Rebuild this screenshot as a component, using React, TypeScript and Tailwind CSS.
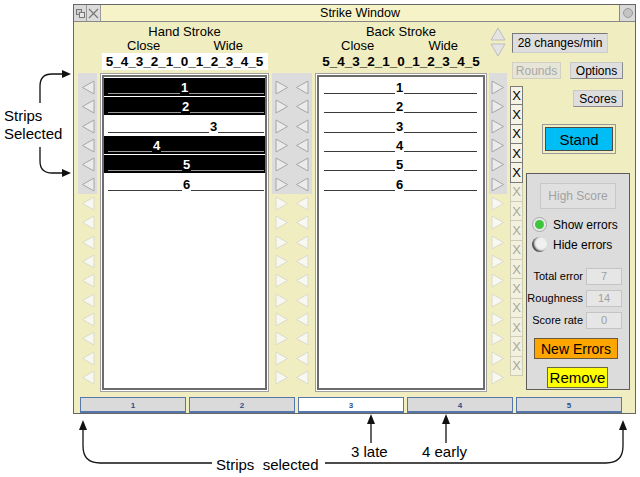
import React from 'react';

type Strip = { n: number; sel: boolean; left: string };

const handStrips: Strip[] = [
  { n: 1, sel: true, left: 'w-[72px]' },
  { n: 2, sel: true, left: 'w-[73px]' },
  { n: 3, sel: false, left: 'w-[101px]' },
  { n: 4, sel: true, left: 'w-[44px]' },
  { n: 5, sel: true, left: 'w-[74px]' },
  { n: 6, sel: false, left: 'w-[74px]' },
];

const backStrips: Strip[] = [1, 2, 3, 4, 5, 6].map((n) => ({ n, sel: false, left: 'w-[71px]' }));

const SCALE = '5_4_3_2_1_0_1_2_3_4_5';

function Tri({ dir, on }: { dir: 'l' | 'r'; on: boolean }) {
  const pts = dir === 'l' ? '13,1 1.5,7.5 13,14' : '1,1 12.5,7.5 1,14';
  return (
    <svg width="14" height="15" viewBox="0 0 14 15">
      <polygon
        points={pts}
        fill={on ? '#ebebeb' : '#f8f8f3'}
        stroke={on ? '#a6a6a6' : '#dcd9ca'}
        strokeWidth="1"
      />
    </svg>
  );
}

function ArrowCol({ dir, width }: { dir: 'l' | 'r'; width: string }) {
  return (
    <div className={`${width} mt-[51px] flex flex-col`}>
      <div className="bg-[#dcdcdc] pt-[5px]">
        {[0, 1, 2, 3, 4, 5].map((i) => (
          <div key={i} className="h-[19.33px] flex items-center justify-center">
            <Tri dir={dir} on />
          </div>
        ))}
      </div>
      {[0, 1, 2, 3, 4, 5, 6, 7, 8, 9].map((i) => (
        <div key={i} className="h-[19.33px] flex items-center justify-center">
          <Tri dir={dir} on={false} />
        </div>
      ))}
    </div>
  );
}

function StripRow({ s, pad }: { s: Strip; pad: string }) {
  const line = s.sel ? 'border-[#9a9a9a]' : 'border-[#3a3a3a]';
  return (
    <div className="h-[19.33px] pb-[1.33px]">
      <div className={`h-full flex items-end pb-[2px] ${pad} ${s.sel ? 'bg-black' : ''}`}>
        <div className={`${s.left} flex-none border-b ${line}`} />
        <span className={`px-[1px] text-[13px] font-bold leading-[13px] ${s.sel ? 'text-white' : 'text-black'}`}>
          {s.n}
        </span>
        <div className={`flex-1 border-b ${line}`} />
      </div>
    </div>
  );
}

function StrokeBox({ strips, pad }: { strips: Strip[]; pad: string }) {
  return (
    <div className="h-[319px] border border-[#a0a0a0] bg-white p-[1px]">
      <div className="h-full border-2 border-[#6c6c6c] pt-[1px]">
        {strips.map((s) => (
          <StripRow key={s.n} s={s} pad={pad} />
        ))}
      </div>
    </div>
  );
}

function Button({ children, className }: { children: React.ReactNode; className: string }) {
  return (
    <div className={`flex items-center justify-center text-[12px] leading-none ${className}`}>{children}</div>
  );
}

function Field({ label, value }: { label: string; value: string }) {
  return (
    <div className="flex items-center h-[17px]">
      <div className="w-[56px] text-right text-[11px] leading-none">{label}</div>
      <div className="ml-[3px] w-[36px] h-full bg-[#e6e6e6] border border-[#c4c4c4] flex items-center justify-center text-[11px] text-[#a0a0a0]">
        {value}
      </div>
    </div>
  );
}

export default function App() {
  return (
    <div className="relative w-[640px] h-[477px] overflow-hidden bg-white pl-[73px] pt-[4px] font-['Liberation_Sans',Arial,Helvetica,sans-serif] text-black">
      {/* window */}
      <div className="w-[563px] h-[410px] bg-[#f0eec1] border border-[#666] flex flex-col">
        {/* title bar */}
        <div className="h-[17px] flex border-b border-[#888]">
          <div className="w-[13px] bg-[#d9d9d9] border-r border-[#999] flex items-center justify-center">
            <svg width="9" height="9" viewBox="0 0 9 9">
              <rect x="0.5" y="0.5" width="5" height="5" fill="#cfcfcf" stroke="#777" />
              <rect x="3.5" y="3.5" width="5" height="5" fill="#e6e6e6" stroke="#777" />
            </svg>
          </div>
          <div className="w-[14px] bg-[#dcdcdc] border-r border-[#999] flex items-center justify-center">
            <svg width="11" height="11" viewBox="0 0 11 11">
              <path d="M1 1 L10 10 M10 1 L1 10" stroke="#777" strokeWidth="1.2" />
            </svg>
          </div>
          <div className="flex-1 bg-[#f6f3c9] text-center text-[12.5px] leading-[16px]">Strike Window</div>
          <div className="w-[16px] bg-[#d9d9d9] border-l border-[#888] flex items-center justify-center">
            <span className="w-[10px] h-[10px] rounded-full bg-[#c4c4c4] border border-[#9a9a9a]" />
          </div>
        </div>

        {/* columns */}
        <div className="h-[370px] flex items-start pl-[4px]">
          <ArrowCol dir="l" width="w-[19px]" />

          {/* hand stroke */}
          <div className="w-[169px] ml-[3px] flex flex-col">
            <div className="h-[51px] flex flex-col items-center pt-[3px]">
              <div className="text-[13px] leading-[14px]">Hand Stroke</div>
              <div className="w-full flex justify-between pl-[27px] pr-[26px] text-[13px] leading-[14px]">
                <span>Close</span>
                <span>Wide</span>
              </div>
              <div className="w-[166px] bg-white text-center text-[13.5px] font-bold leading-[17px]">{SCALE}</div>
            </div>
            <StrokeBox strips={handStrips} pad="pl-[4px] pr-[1px]" />
          </div>

          <div className="ml-[3px] flex">
            <ArrowCol dir="r" width="w-[20px]" />
            <ArrowCol dir="l" width="w-[20px]" />
          </div>

          {/* back stroke */}
          <div className="w-[172px] ml-[3px] flex flex-col">
            <div className="h-[51px] flex flex-col items-center pt-[3px]">
              <div className="text-[13px] leading-[14px]">Back Stroke</div>
              <div className="w-full flex justify-between pl-[26px] pr-[29px] text-[13px] leading-[14px]">
                <span>Close</span>
                <span>Wide</span>
              </div>
              <div className="text-center text-[13.5px] font-bold leading-[17px]">{SCALE}</div>
            </div>
            <StrokeBox strips={backStrips} pad="pl-[5px] pr-[6px]" />
          </div>

          {/* back right arrows with up/down */}
          <div className="relative ml-[2px] w-[18px]">
            <div className="absolute left-[1px] top-[5px] flex flex-col gap-[2px]">
              <svg width="16" height="14" viewBox="0 0 16 14">
                <polygon points="8,1 15,13 1,13" fill="#e4e4e4" stroke="#bdbdbd" />
              </svg>
              <svg width="16" height="14" viewBox="0 0 16 14">
                <polygon points="1,1 15,1 8,13" fill="#e4e4e4" stroke="#bdbdbd" />
              </svg>
            </div>
            <ArrowCol dir="r" width="w-[18px]" />
          </div>

          {/* right area */}
          <div className="ml-[2px] w-[122px] flex flex-col">
            <div className="mt-[11px] ml-[3px] w-[96px] h-[20px] bg-[#dedede] border border-[#777] border-b-[#ccc] border-r-[#ccc] flex items-center justify-center text-[12px]">
              28 changes/min
            </div>
            <div className="mt-[9px] flex">
              <Button className="ml-[3px] w-[49px] h-[17px] bg-[#e6e5d8] border border-[#d2d0c2] text-[#a8a8a8]">Rounds</Button>
              <Button className="ml-[9px] w-[53px] h-[17px] bg-[#dedede] border border-[#8a8a8a] border-t-[#c8c8c8] border-l-[#c8c8c8]">Options</Button>
            </div>
            <div className="mt-[7px] flex">
              <div className="ml-[1px] w-[13px] flex flex-col">
                {Array.from({ length: 15 }).map((_, i) => (
                  <div
                    key={i}
                    className={`h-[19.33px] border-b border-r border-l flex items-center justify-center text-[13px] leading-none ${
                      i === 0 ? 'border-t' : ''
                    } ${i < 5 ? 'border-[#7a7a7a] bg-[#f4f3e6] text-black' : 'border-[#cfccb6] bg-[#f2f1e0] text-[#a9a99a]'}`}
                  >
                    X
                  </div>
                ))}
              </div>
              <div className="flex-1 flex flex-col">
                <Button className="mt-[4px] self-end mr-[8px] w-[50px] h-[17px] bg-[#dedede] border border-[#8a8a8a] border-t-[#c8c8c8] border-l-[#c8c8c8]">Scores</Button>
                <div className="mt-[17px] ml-[19px] w-[74px] h-[30px] border border-[#9a9a9a] p-[2px]">
                  <div className="h-full bg-[#00bdf6] border border-[#4a4a4a] flex items-center justify-center text-[15px] leading-none">
                    Stand
                  </div>
                </div>
                <div className="mt-[19px] ml-[3px] w-[104px] h-[217px] bg-[#dcdcdc] border border-[#5c5c5c] flex flex-col">
                  <Button className="mt-[9px] ml-[13px] w-[76px] h-[26px] bg-[#e0e0e0] border border-[#c8c8c8] text-[#a2a2a2]">
                    High Score
                  </Button>
                  <div className="mt-[8px] ml-[5px] flex items-center h-[15px] gap-[6px]">
                    <span className="w-[15px] h-[15px] rounded-full bg-[#e8e8e8] border border-[#a8a8a8] flex items-center justify-center">
                      <span className="w-[9px] h-[9px] rounded-full bg-[#3cc63c]" />
                    </span>
                    <span className="text-[12px] leading-none">Show errors</span>
                  </div>
                  <div className="mt-[5px] ml-[5px] flex items-center h-[15px] gap-[6px]">
                    <span className="w-[15px] h-[15px] rounded-full bg-[#f0f0f0] shadow-[inset_2px_-1px_2px_#444]" />
                    <span className="text-[12px] leading-none">Hide errors</span>
                  </div>
                  <div className="mt-[16px] flex flex-col gap-[5px]">
                    <Field label="Total error" value="7" />
                    <Field label="Roughness" value="14" />
                    <Field label="Score rate" value="0" />
                  </div>
                  <div className="mt-[9px] ml-[7px] w-[84px] h-[21px] bg-[#ffa500] border border-[#6a5a3a] flex items-center justify-center text-[14px] leading-none">
                    New Errors
                  </div>
                  <div className="mt-[8px] ml-[20px] w-[61px] h-[21px] bg-[#ffff00] border border-[#6a6a3a] flex items-center justify-center text-[15px] leading-none">
                    Remove
                  </div>
                </div>
              </div>
            </div>
          </div>
        </div>

        {/* strip tabs */}
        <div className="mt-[5px] ml-[6px] flex gap-[3px]">
          {[1, 2, 3, 4, 5].map((n) => (
            <div
              key={n}
              className={`w-[106px] h-[16px] border border-[#5577aa] border-b-2 flex items-end justify-center ${
                n === 3 ? 'bg-white' : 'bg-[#dadada]'
              }`}
            >
              <span className="text-[8px] font-bold leading-[11px] text-[#2c4e8e]">{n}</span>
            </div>
          ))}
        </div>
      </div>

      {/* annotations */}
      <svg className="absolute inset-0 pointer-events-none" width="640" height="477" viewBox="0 0 640 477">
        <g fill="none" stroke="#111" strokeWidth="1.3">
          <path d="M40 103 L40 86 Q40 74 52 74 L63 74" />
          <path d="M40 147 L40 161 Q40 173 52 173 L63 173" />
          <path d="M83 428 L83 446 Q83 463 100 463 L212 463" />
          <path d="M325 463 L606 463 Q623 463 623 446 L623 428" />
          <path d="M371 443 L371 422" />
          <path d="M446 443 L446 422" />
        </g>
        <g fill="#111">
          <polygon points="71,74 62,70 62,78" />
          <polygon points="71,173 62,169 62,177" />
          <polygon points="83,420 79,430 87,430" />
          <polygon points="623,420 619,430 627,430" />
          <polygon points="371,414 367,424 375,424" />
          <polygon points="446,414 442,424 450,424" />
        </g>
      </svg>
      <div className="absolute left-[4px] top-[107px] text-[15px] leading-[18px]">
        <div>Strips</div>
        <div>Selected</div>
      </div>
      <div className="absolute left-[216px] top-[456px] text-[15px] leading-[18px] whitespace-pre">Strips  selected</div>
      <div className="absolute left-[351px] top-[443px] text-[15px] leading-[18px]">3 late</div>
      <div className="absolute left-[422px] top-[443px] text-[15px] leading-[18px]">4 early</div>
    </div>
  );
}
